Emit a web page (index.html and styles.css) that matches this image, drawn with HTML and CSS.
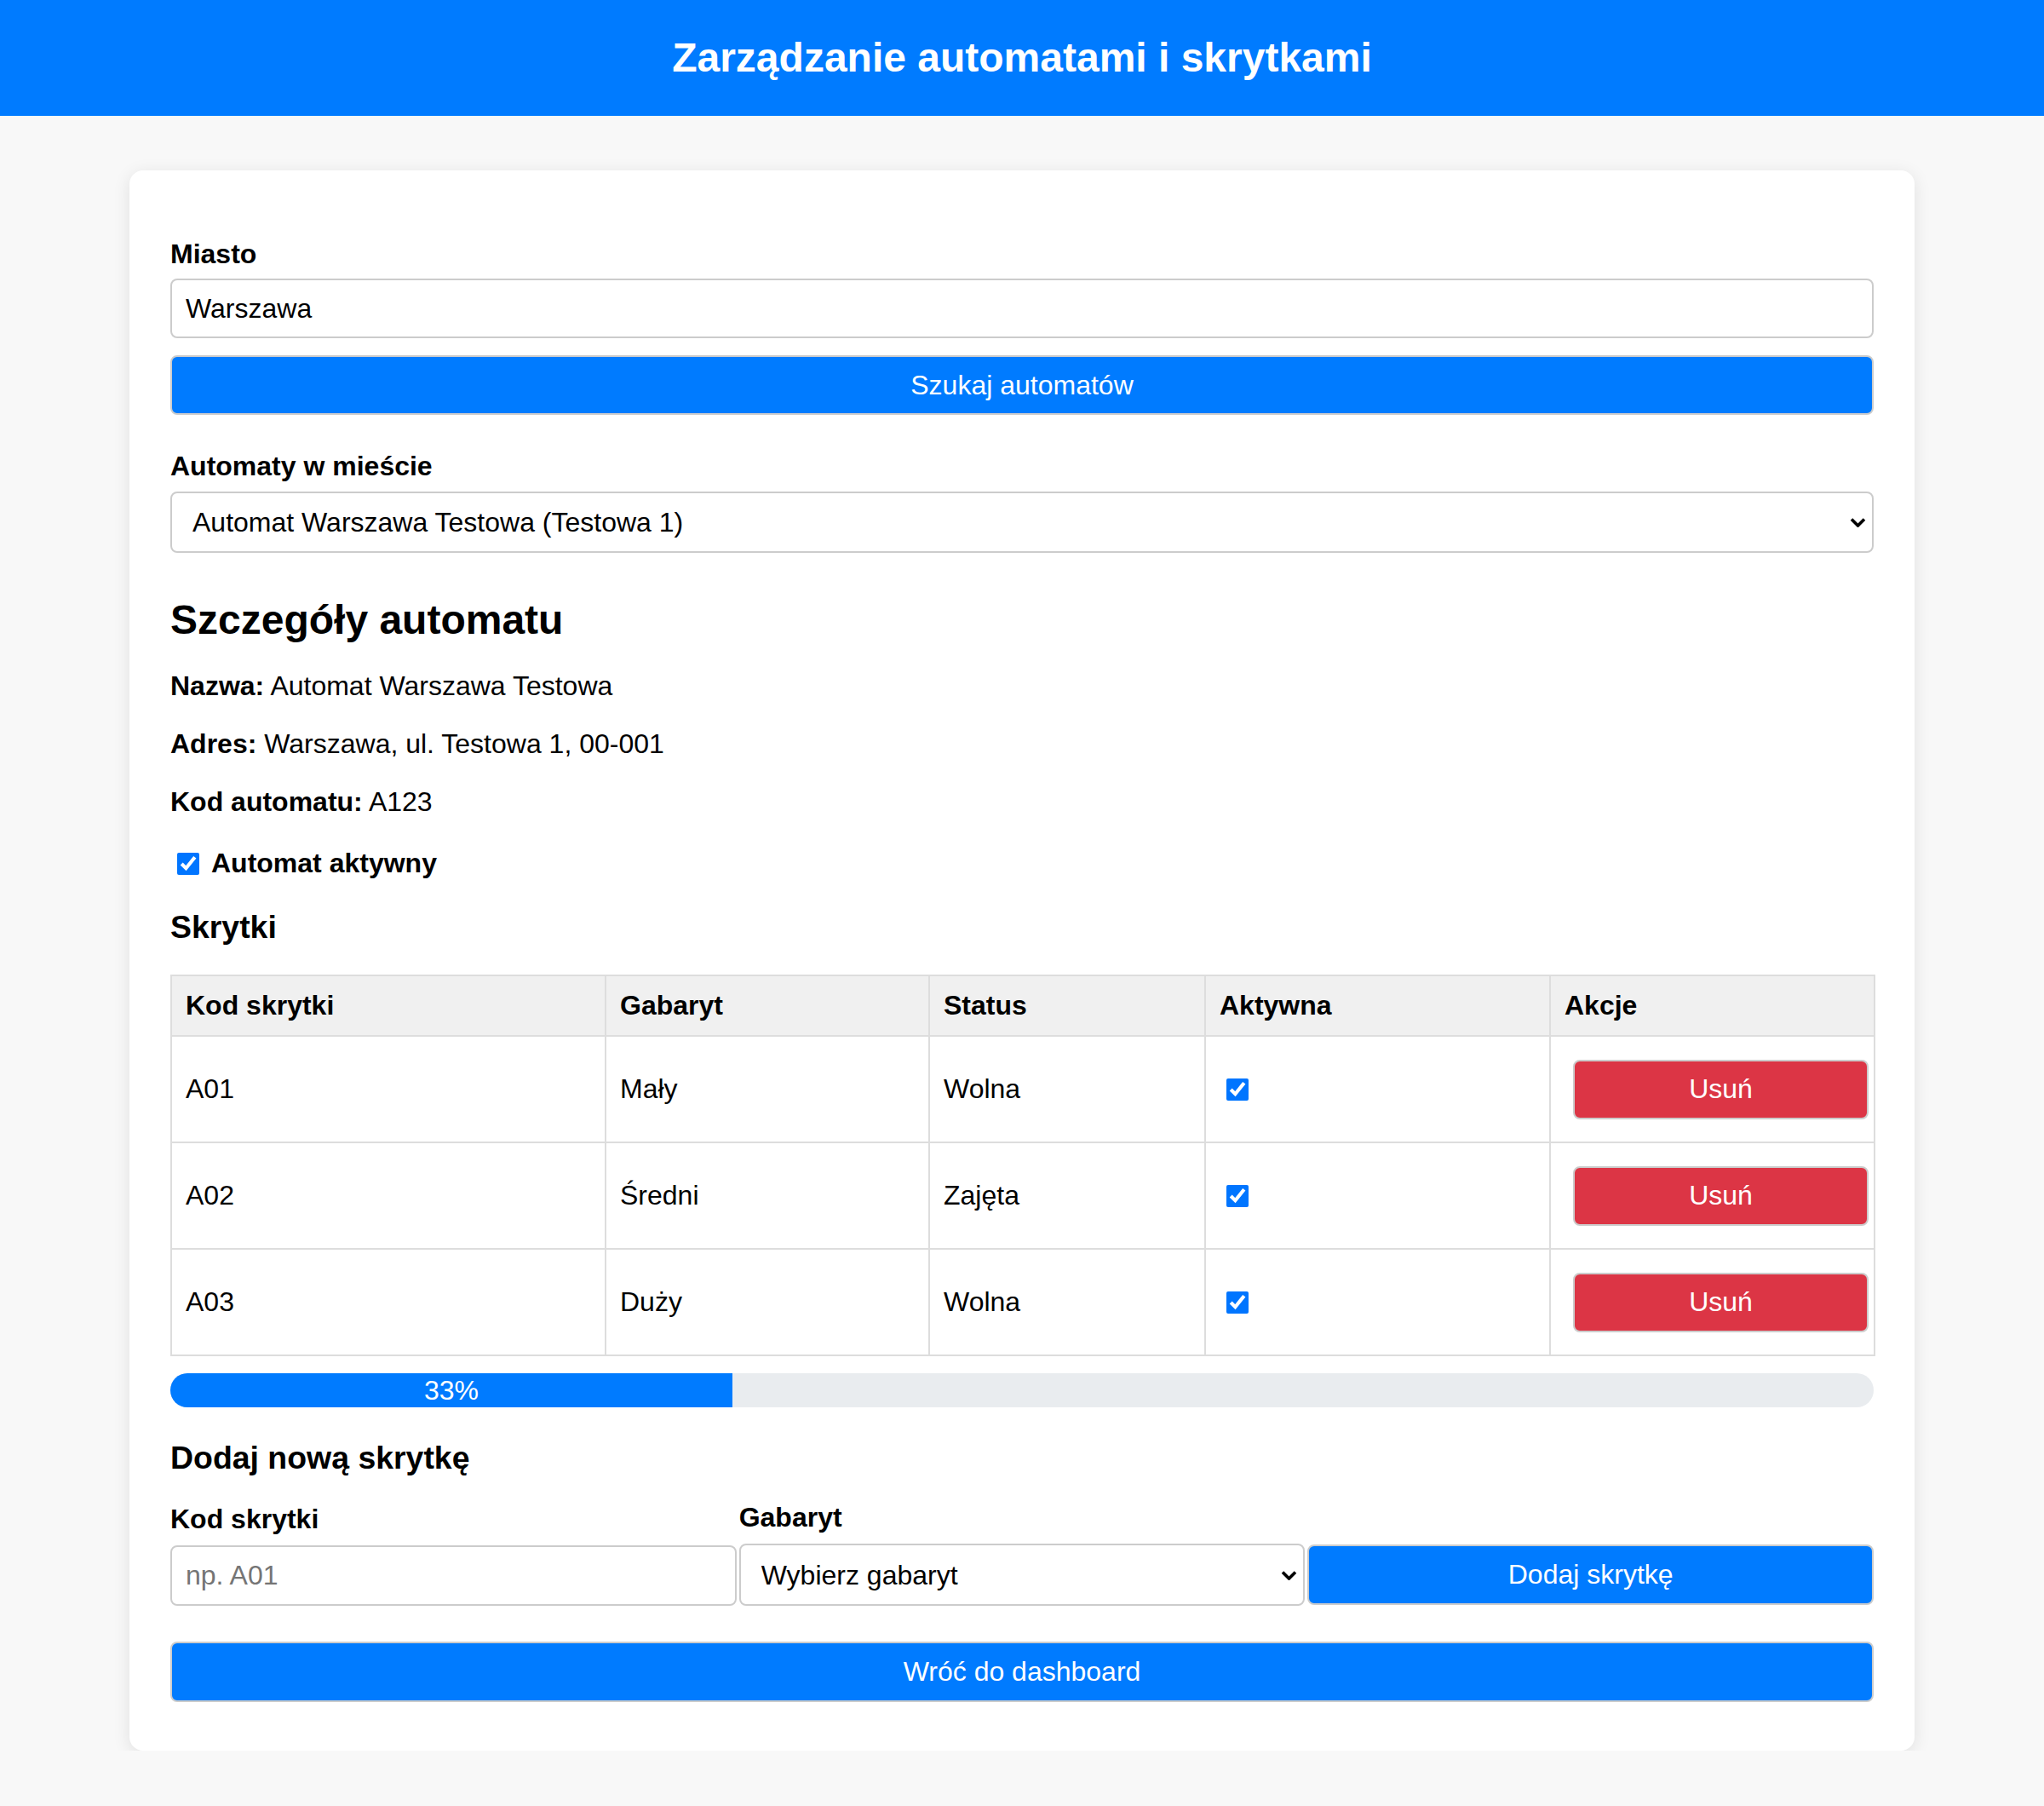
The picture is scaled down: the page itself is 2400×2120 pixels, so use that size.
FILE: index.html
```html
<!DOCTYPE html>
<html lang="pl">
<head>
<meta charset="utf-8">
<title>Zarządzanie automatami i skrytkami</title>
<link rel="stylesheet" href="styles.css">
</head>
<body>
<header class="topbar">
  <h1 class="topbar-title">Zarządzanie automatami i skrytkami</h1>
</header>
<main class="card">
  <label class="lbl lbl-first" for="city">Miasto</label>
  <input id="city" class="ctl ctl-input" type="text" value="Warszawa">
  <button class="btn btn-primary btn-block btn-search" type="button">Szukaj automatów</button>

  <label class="lbl lbl-machines" for="machine">Automaty w mieście</label>
  <div class="select-wrap select-machines">
    <select id="machine" class="ctl ctl-select">
      <option>Automat Warszawa Testowa (Testowa 1)</option>
    </select>
    <svg class="chev" viewBox="0 0 19 12" width="19" height="12" aria-hidden="true"><path d="M2 2.5 L9.5 10 L17 2.5" fill="none" stroke="#000" stroke-width="3.6"/></svg>
  </div>

  <h2 class="section-title">Szczegóły automatu</h2>
  <p class="info info-first"><strong>Nazwa:</strong> Automat Warszawa Testowa</p>
  <p class="info"><strong>Adres:</strong> Warszawa, ul. Testowa 1, 00-001</p>
  <p class="info"><strong>Kod automatu:</strong> A123</p>
  <label class="active-toggle"><input type="checkbox" class="chk chk-main" checked><span>Automat aktywny</span></label>

  <h3 class="sub-title sub-lockers">Skrytki</h3>
  <table class="lockers">
    <colgroup>
      <col class="c-code"><col class="c-size"><col class="c-status"><col class="c-active"><col class="c-actions">
    </colgroup>
    <thead>
      <tr><th>Kod skrytki</th><th>Gabaryt</th><th>Status</th><th>Aktywna</th><th>Akcje</th></tr>
    </thead>
    <tbody>
      <tr><td>A01</td><td>Mały</td><td>Wolna</td><td><input type="checkbox" class="chk chk-cell" checked></td><td><button class="btn btn-danger" type="button">Usuń</button></td></tr>
      <tr><td>A02</td><td>Średni</td><td>Zajęta</td><td><input type="checkbox" class="chk chk-cell" checked></td><td><button class="btn btn-danger" type="button">Usuń</button></td></tr>
      <tr><td>A03</td><td>Duży</td><td>Wolna</td><td><input type="checkbox" class="chk chk-cell" checked></td><td><button class="btn btn-danger" type="button">Usuń</button></td></tr>
    </tbody>
  </table>

  <div class="progress"><div class="progress-fill" style="width:33%">33%</div></div>

  <h3 class="sub-title sub-add">Dodaj nową skrytkę</h3>
  <div class="add-row">
    <div class="add-col">
      <label class="lbl lbl-add" for="newcode">Kod skrytki</label>
      <input id="newcode" class="ctl ctl-input" type="text" placeholder="np. A01">
    </div>
    <div class="add-col">
      <label class="lbl lbl-add" for="newsize">Gabaryt</label>
      <div class="select-wrap">
        <select id="newsize" class="ctl ctl-select">
          <option>Wybierz gabaryt</option>
          <option>Mały</option>
          <option>Średni</option>
          <option>Duży</option>
        </select>
        <svg class="chev" viewBox="0 0 19 12" width="19" height="12" aria-hidden="true"><path d="M2 2.5 L9.5 10 L17 2.5" fill="none" stroke="#000" stroke-width="3.6"/></svg>
      </div>
    </div>
    <div class="add-col">
      <button class="btn btn-primary btn-block btn-add" type="button">Dodaj skrytkę</button>
    </div>
  </div>

  <button class="btn btn-primary btn-block btn-back" type="button">Wróć do dashboard</button>
</main>
</body>
</html>
```

FILE: styles.css
```css
html, body {
  margin: 0;
  padding: 0;
}

body {
  background: #f8f8f8;
  font-family: "Liberation Sans", Arial, sans-serif;
  font-size: 32px;
  color: #000;
}

.topbar {
  background: #007bff;
  padding: 40px 0;
}

.topbar-title {
  margin: 0;
  color: #fff;
  font-size: 48px;
  line-height: 56px;
  font-weight: bold;
  text-align: center;
}

.card {
  display: block;
  width: 2000px;
  margin: 64px auto 0;
  padding: 48px 48px 57px;
  background: #fff;
  border-radius: 16px;
  box-shadow: 0 4px 20px rgba(0, 0, 0, 0.1);
}

.lbl {
  display: block;
  font-weight: bold;
  font-size: 32px;
}

.lbl-first { margin-top: 32px; }
.lbl-machines { margin-top: 42px; }

.ctl {
  display: block;
  width: 100%;
  box-sizing: border-box;
  font-family: "Liberation Sans", Arial, sans-serif;
  font-size: 32px;
  color: #000;
  background: #fff;
  border: 2px solid #ccc;
  border-radius: 8px;
  margin: 0;
}

.ctl-input {
  height: 70px;
  padding: 0 16px;
  margin-top: 10px;
}

.ctl-input::placeholder {
  color: #757575;
}

.select-wrap {
  position: relative;
}

.select-machines {
  margin-top: 11px;
}

.ctl-select {
  height: 72px;
  padding: 0 50px 0 24px;
  appearance: none;
  -webkit-appearance: none;
}

.chev {
  position: absolute;
  right: 9px;
  top: 50%;
  margin-top: -6px;
  pointer-events: none;
}

.btn {
  font-family: "Liberation Sans", Arial, sans-serif;
  font-size: 32px;
  color: #fff;
  border: 2px solid #ccc;
  border-radius: 8px;
  height: 70px;
  box-sizing: border-box;
  padding: 0 16px;
  cursor: pointer;
}

.btn-primary {
  background: #007bff;
}

.btn-danger {
  background: #dc3545;
  width: 100%;
  margin: 10px;
}

.btn-block {
  display: block;
  width: 100%;
}

.btn-search { margin-top: 20px; }
.btn-back { margin-top: 42px; height: 71px; }

.section-title {
  margin: 51px 0 0;
  font-size: 48px;
  font-weight: bold;
}

.info {
  margin: 31px 0 0;
}

.info-first { margin-top: 32px; }

.active-toggle {
  display: flex;
  align-items: center;
  margin-top: 35px;
  font-weight: bold;
  height: 37px;
}

.chk {
  width: 26px;
  height: 26px;
  margin: 0;
}

.chk-main {
  margin: 0 14px 0 8px;
}

.chk-cell {
  display: block;
  margin: 0 0 0 8px;
}

.sub-title {
  margin: 35px 0 0;
  font-size: 37.44px;
  font-weight: bold;
}

.sub-add {
  margin-top: 38px;
}

.lockers {
  width: 100%;
  margin-top: 34px;
  border-collapse: collapse;
  table-layout: fixed;
}

.c-code { width: 510px; }
.c-size { width: 380px; }
.c-status { width: 324px; }
.c-active { width: 405px; }
.c-actions { width: 381px; }

.lockers th,
.lockers td {
  border: 2px solid #ddd;
  padding: 16px;
  text-align: left;
  vertical-align: middle;
}

.lockers td {
  padding: 16.5px 16px 16.5px;
}

.lockers th {
  background: #f0f0f0;
  font-weight: bold;
}

.progress {
  margin-top: 20px;
  height: 40px;
  background: #e9ecef;
  border-radius: 20px;
  overflow: hidden;
}

.progress-fill {
  height: 40px;
  line-height: 40px;
  background: #007bff;
  color: #fff;
  text-align: center;
  font-size: 32px;
}

.add-row {
  display: grid;
  grid-template-columns: 1fr 1fr 1fr;
  column-gap: 3px;
  align-items: end;
  margin-top: 30px;
}

.lbl-add {
  margin-bottom: 12px;
}

.add-col .ctl-input {
  margin-top: 0;
  height: 71px;
}

.add-col .ctl-select {
  height: 73px;
}

.btn-add {
  height: 71px;
  margin-bottom: 1px;
}
```
